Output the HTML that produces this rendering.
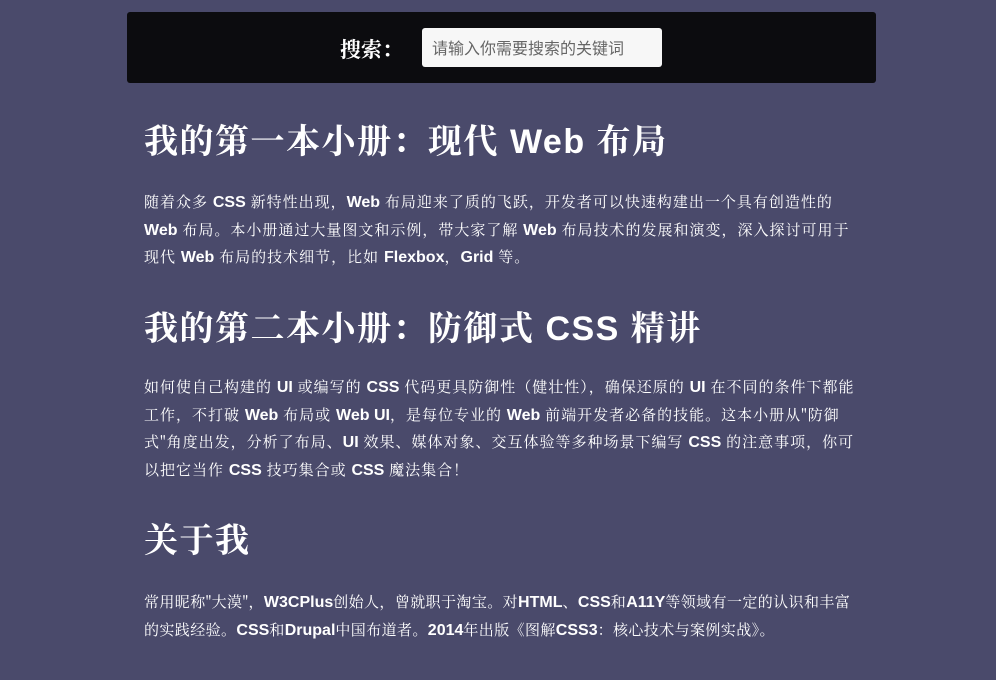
<!DOCTYPE html>
<html><head><meta charset="utf-8"><style>
html,body{margin:0;padding:0;background:#4a4a6b;width:996px;height:680px;overflow:hidden}
body{font-family:"Liberation Sans","Noto Serif CJK SC","Noto Sans CJK SC",sans-serif;color:#fff}
.bar{position:absolute;left:127px;top:12px;width:749px;height:71px;background:#0c0c0f;border-radius:3px}
.lbl{position:absolute;font-size:21px;font-weight:bold;font-family:"Noto Serif CJK SC",serif}
.inp{position:absolute;width:240px;height:39px;background:#f7f7f7;border-radius:3px;color:#666;font-size:16px;line-height:39px;padding-left:10px;box-sizing:border-box;font-family:"Noto Sans CJK SC",sans-serif}
h1{position:absolute;left:144px;margin:0;font-size:34px;font-weight:bold;font-family:"Liberation Sans","Noto Serif CJK SC",serif;white-space:nowrap;letter-spacing:1.5px}
p{position:absolute;left:144px;margin:0;font-size:15px;line-height:26.5px;font-family:"Noto Serif CJK SC",serif;white-space:nowrap;letter-spacing:1px}
p b{font-family:"Liberation Sans",sans-serif;font-size:16px;letter-spacing:0}
</style></head><body>
<div class="bar"><div class="lbl" style="left:213px;top:22px">搜索：</div><div class="inp" style="left:295px;top:16px">请输入你需要搜索的关键词</div></div>
<h1 style="top:114px">我的第一本小册：现代 Web 布局</h1>
<p style="top:189px">随着众多 <b>CSS</b> 新特性出现，<b>Web</b> 布局迎来了质的飞跃，开发者可以快速构建出一个具有创造性的<br><b>Web</b> 布局。本小册通过大量图文和示例，带大家了解 <b>Web</b> 布局技术的发展和演变，深入探讨可用于<br>现代 <b>Web</b> 布局的技术细节，比如 <b>Flexbox</b>，<b>Grid</b> 等。</p>
<h1 style="top:301px">我的第二本小册：防御式 CSS 精讲</h1>
<p style="top:374px">如何使自己构建的 <b>UI</b> 或编写的 <b>CSS</b> 代码更具防御性（健壮性），确保还原的 <b>UI</b> 在不同的条件下都能<br>工作，不打破 <b>Web</b> 布局或 <b>Web UI</b>，是每位专业的 <b>Web</b> 前端开发者必备的技能。这本小册从"防御<br>式"角度出发，分析了布局、<b>UI</b> 效果、媒体对象、交互体验等多种场景下编写 <b>CSS</b> 的注意事项，你可<br>以把它当作 <b>CSS</b> 技巧集合或 <b>CSS</b> 魔法集合！</p>
<h1 style="top:513px">关于我</h1>
<p style="top:589px;letter-spacing:0.4px">常用昵称"大漠"，<b>W3CPlus</b>创始人，曾就职于淘宝。对<b>HTML</b>、<b>CSS</b>和<b>A11Y</b>等领域有一定的认识和丰富<br>的实践经验。<b>CSS</b>和<b>Drupal</b>中国布道者。<b>2014</b>年出版《图解<b>CSS3</b>：核心技术与案例实战》。</p>
</body></html>
